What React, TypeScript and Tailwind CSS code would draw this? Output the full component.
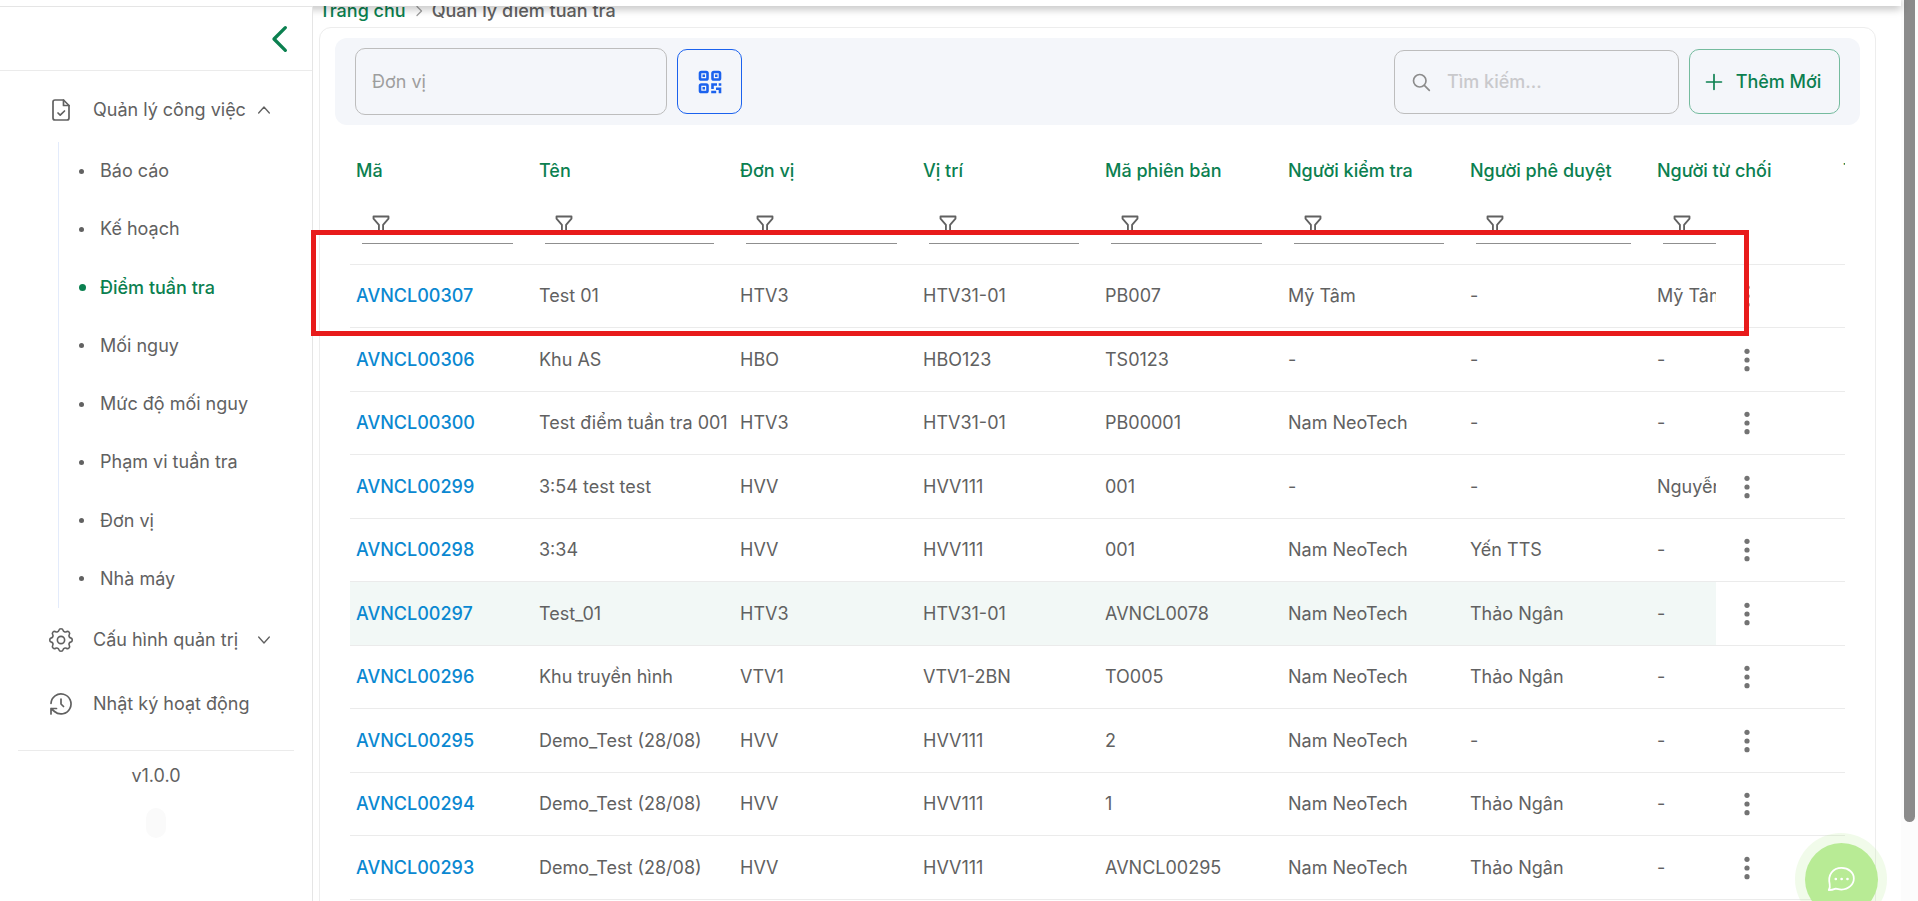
import type { ReactNode } from "react";

const workItems = [
  "Báo cáo",
  "Kế hoạch",
  "Điểm tuần tra",
  "Mối nguy",
  "Mức độ mối nguy",
  "Phạm vi tuần tra",
  "Đơn vị",
  "Nhà máy",
];

const columns = [
  { label: "Mã", width: "w-[183px]" },
  { label: "Tên", width: "w-[201px]" },
  { label: "Đơn vị", width: "w-[183px]" },
  { label: "Vị trí", width: "w-[182px]" },
  { label: "Mã phiên bản", width: "w-[183px]" },
  { label: "Người kiểm tra", width: "w-[182px]" },
  { label: "Người phê duyệt", width: "w-[187px]" },
  { label: "Người từ chối", width: "w-[186px]" },
  { label: "Trạng thái", width: "w-[187px]" },
];

const rows = [
  ["AVNCL00307", "Test 01", "HTV3", "HTV31-01", "PB007", "Mỹ Tâm", "-", "Mỹ Tâm"],
  ["AVNCL00306", "Khu AS", "HBO", "HBO123", "TS0123", "-", "-", "-"],
  ["AVNCL00300", "Test điểm tuần tra 001", "HTV3", "HTV31-01", "PB00001", "Nam NeoTech", "-", "-"],
  ["AVNCL00299", "3:54 test test", "HVV", "HVV111", "001", "-", "-", "Nguyễn"],
  ["AVNCL00298", "3:34", "HVV", "HVV111", "001", "Nam NeoTech", "Yến TTS", "-"],
  ["AVNCL00297", "Test_01", "HTV3", "HTV31-01", "AVNCL0078", "Nam NeoTech", "Thảo Ngân", "-"],
  ["AVNCL00296", "Khu truyền hình", "VTV1", "VTV1-2BN", "TO005", "Nam NeoTech", "Thảo Ngân", "-"],
  ["AVNCL00295", "Demo_Test (28/08)", "HVV", "HVV111", "2", "Nam NeoTech", "-", "-"],
  ["AVNCL00294", "Demo_Test (28/08)", "HVV", "HVV111", "1", "Nam NeoTech", "Thảo Ngân", "-"],
  ["AVNCL00293", "Demo_Test (28/08)", "HVV", "HVV111", "AVNCL00295", "Nam NeoTech", "Thảo Ngân", "-"],
];

const hoveredRow = "AVNCL00297";

function Icon({ className, width = 1.5, children }: { className: string; width?: number; children: ReactNode }) {
  return (
    <svg
      viewBox="0 0 24 24"
      className={className}
      fill="none"
      stroke="currentColor"
      strokeWidth={width}
      strokeLinecap="round"
      strokeLinejoin="round"
      aria-hidden="true"
    >
      {children}
    </svg>
  );
}

function DocIcon() {
  return (
    <Icon className="w-6 h-6" width={1.7}>
      <path d="M14.500 2H6a2 2 0 0 0-2 2v16a2 2 0 0 0 2 2h12a2 2 0 0 0 2-2V7.500z" />
      <path d="M14.500 2v5.500H20M9 15l2.200 2.200 4.300-4.200" />
    </Icon>
  );
}

function GearIcon() {
  return (
    <Icon className="w-[30px] h-[30px]" width={1.3}>
      <circle cx="12" cy="12" r="2.900" />
      <path d="M10.300 4.300c.4-1.750 3-1.750 3.400 0a1.720 1.720 0 0 0 2.570 1.070c1.550-.94 3.310.83 2.370 2.370a1.720 1.720 0 0 0 1.070 2.570c1.750.4 1.750 3 0 3.400a1.720 1.720 0 0 0-1.070 2.570c.94 1.540-.83 3.310-2.370 2.370a1.720 1.720 0 0 0-2.570 1.060c-.4 1.760-3 1.760-3.400 0a1.720 1.720 0 0 0-2.570-1.060c-1.540.94-3.310-.83-2.370-2.370a1.720 1.720 0 0 0-1.060-2.570c-1.760-.4-1.760-3 0-3.400a1.720 1.720 0 0 0 1.060-2.570c-.94-1.540.83-3.310 2.370-2.370a1.720 1.720 0 0 0 2.570-1.070z" />
    </Icon>
  );
}

function HistoryIcon() {
  return (
    <Icon className="w-6 h-6" width={1.7}>
      <path d="M2 11.500a10 10 0 1 1 3.500 8L2 16.500M2 22v-5.500h5.500M12 7v5l2.500 2.500" />
    </Icon>
  );
}

function FilterIcon() {
  return (
    <Icon className="w-5 h-5" width={2.2}>
      <path d="M3 3h18v2.500L14.500 13v8h-5v-8L3 5.500z" />
    </Icon>
  );
}

function QrIcon() {
  return (
    <svg viewBox="0 0 24 24" className="w-6 h-6" fill="none" stroke="currentColor" strokeWidth="2.600" aria-hidden="true">
      <rect x="2" y="2" width="7.500" height="7.500" rx="1.300" />
      <rect x="14.500" y="2" width="7.500" height="7.500" rx="1.300" />
      <rect x="2" y="14.500" width="7.500" height="7.500" rx="1.300" />
      <path d="M4.500 5.750h2.500M17 5.750h2.500M4.500 18.250h2.500M14.500 19v-4.500H19M22 13.200v2.600M18 18.700h4v4.600M13.200 22h5" />
    </svg>
  );
}

function Sidebar() {
  return (
    <aside className="relative z-20 w-[313px] shrink-0 bg-white border-t border-r border-[#e5e5e5]">
      <div className="h-16 flex items-center justify-end pr-4 border-b border-[#ebebeb]">
        <button type="button" aria-label="Thu gọn" className="text-[#0b8050]">
          <Icon className="w-8 h-8" width={2.5}>
            <path d="M16 3.500 7.500 12l8.500 8.500" />
          </Icon>
        </button>
      </div>
      <nav>
        <button type="button" className="w-full h-16 mt-[7px] pl-12 flex items-center">
          <span className="w-[45px] pl-px"><DocIcon /></span>
          <span>Quản lý công việc</span>
          <Icon className="w-4 h-4 ml-2.5" width={2}>
            <path d="m4 16.500 8-9 8 9" />
          </Icon>
        </button>
        <ul className="ml-[58px] h-[466px] flex flex-col border-l border-[#e3ebfb]">
          {workItems.map((item) => (
            <li key={item} className="flex-1 flex items-center">
              <a
                href="#"
                className={
                  item === "Điểm tuần tra"
                    ? "flex items-center text-[#0b8050] font-medium"
                    : "flex items-center"
                }
              >
                <span className="w-[41px] pl-5">
                  <span
                    className={
                      item === "Điểm tuần tra"
                        ? "block w-[7px] h-[7px] rounded-full bg-current"
                        : "block w-[5px] h-[5px] rounded-full bg-current"
                    }
                  />
                </span>
                {item}
              </a>
            </li>
          ))}
        </ul>
        <button type="button" className="w-full h-16 pl-[46px] flex items-center">
          <span className="w-[47px]"><GearIcon /></span>
          <span>Cấu hình quản trị</span>
          <Icon className="w-4 h-4 ml-[18px]" width={2}>
            <path d="m4 7.500 8 9 8-9" />
          </Icon>
        </button>
        <a href="#" className="h-16 pl-12 flex items-center">
          <span className="w-[45px] pl-px"><HistoryIcon /></span>
          Nhật ký hoạt động
        </a>
      </nav>
      <div className="mx-[18px] mt-3.5 pt-[11px] border-t border-[#ebebeb] flex flex-col items-center">
        <span>v1.0.0</span>
        <span className="mt-[18px] w-5 h-[30px] rounded-full bg-[#fafafa]" />
      </div>
    </aside>
  );
}

function Toolbar() {
  return (
    <div className="flex items-center justify-between bg-[#f4f6fa] rounded-xl px-5 h-[87px]">
      <div className="flex items-center gap-2.5">
        <input
          type="text"
          aria-label="Đơn vị"
          placeholder="Đơn vị"
          className="w-[312px] h-[67px] px-4 rounded-[10px] border border-[#bdbdbd] placeholder:text-[#9e9e9e] outline-none"
        />
        <button
          type="button"
          aria-label="Mã QR"
          className="w-[65px] h-[65px] flex items-center justify-center rounded-[10px] border border-[#1b62ee] text-[#1b62ee]"
        >
          <QrIcon />
        </button>
      </div>
      <div className="flex items-center gap-2.5">
        <label className="w-[285px] h-16 px-4 flex items-center gap-4 rounded-[10px] border border-[#bdbdbd]">
          <Icon className="w-5 h-5 shrink-0 text-[#8c8c8c]" width={2}>
            <circle cx="10.500" cy="10.500" r="7.500" />
            <path d="m16 16 6 6" />
          </Icon>
          <input
            type="search"
            aria-label="Tìm kiếm"
            placeholder="Tìm kiếm..."
            className="min-w-0 flex-1 placeholder:text-[#c9c9cc] placeholder:font-medium outline-none"
          />
        </label>
        <button
          type="button"
          className="w-[151px] h-[65px] pr-1 flex items-center justify-center gap-3 rounded-[10px] border border-[#75bb9e] text-[#0b8050] font-medium"
        >
          <Icon className="w-5 h-5" width={2}>
            <path d="M12 3v18M3 12h18" />
          </Icon>
          Thêm Mới
        </button>
      </div>
    </div>
  );
}

function PointTable() {
  return (
    <div className="mx-[15px] mt-[17px] overflow-hidden">
      <table className="w-[1803px] table-fixed border-separate border-spacing-0 text-left whitespace-nowrap">
        <thead>
          <tr className="h-[58px] text-[#0b8050]">
            {columns.map((col) => (
              <th key={col.label} className={`${col.width} px-1.5 font-medium`}>
                {col.label}
              </th>
            ))}
            <th className="w-[129px] sticky right-0" />
          </tr>
          <tr className="h-[65px]">
            {columns.map((col) => (
              <td key={col.label} className="px-1.5 pt-1 align-top border-b border-[#ebebeb]">
                <label className="ml-1.5 mr-3.5 h-10 flex items-center border-b border-[#8f8f8f]">
                  <span className="px-[9px]"><FilterIcon /></span>
                  <input type="text" aria-label={`Lọc ${col.label}`} className="min-w-0 flex-1 outline-none" />
                </label>
              </td>
            ))}
            <td className="sticky right-0 bg-white border-b border-[#ebebeb]" />
          </tr>
        </thead>
        <tbody>
          {rows.map((row) => (
            <tr
              key={row[0]}
              className={row[0] === hoveredRow ? "odd:h-[63px] even:h-16 bg-[#f2f8f6]" : "odd:h-[63px] even:h-16"}
            >
              {row.map((cell, i) => (
                <td key={i} className="px-1.5 border-b border-[#ebebeb]">
                  {i === 0 ? (
                    <a href="#" className="text-[#0a88d1] font-medium">{cell}</a>
                  ) : (
                    cell
                  )}
                </td>
              ))}
              <td className="border-b border-[#ebebeb]" />
              <td className="sticky right-0 bg-white border-b border-[#ebebeb] pl-[19px]">
                <button type="button" aria-label="Tùy chọn" className="block text-[#737373]">
                  <svg viewBox="0 0 24 24" className="w-6 h-6" fill="currentColor" aria-hidden="true">
                    <circle cx="12" cy="3.300" r="2.600" />
                    <circle cx="12" cy="12" r="2.600" />
                    <circle cx="12" cy="20.700" r="2.600" />
                  </svg>
                </button>
              </td>
            </tr>
          ))}
        </tbody>
      </table>
    </div>
  );
}

function ChatButton() {
  return (
    <button
      type="button"
      aria-label="Trò chuyện"
      className="fixed z-40 right-[31px] -bottom-6 w-[92px] h-[92px] flex items-center justify-center rounded-full bg-[#b8eb95]/20"
    >
      <span className="w-[73px] h-[73px] flex items-center justify-center rounded-full bg-[#b8eb95] text-white">
        <Icon className="w-7 h-7" width={1.5}>
          <path d="M1.500 21.500c1-1.500 1.200-3 .8-5C.5 8.500 5 2.500 12.500 2.500c6 0 10.500 4 10.500 9s-4.500 9.500-10.500 9.500c-2 0-3.500-.5-5-.8-2 .8-4 1.300-6 1.300z" />
          <path d="M7.500 12h.1M12.500 12h.1M17.500 12h.1" strokeWidth="2.200" />
        </Icon>
      </span>
    </button>
  );
}

export default function App() {
  return (
    <div className="flex h-screen overflow-hidden bg-white font-['Inter',sans-serif] text-lg text-[#616161]">
      <div className="flex-1 min-w-0 flex flex-col">
        <header className="relative z-10 h-1.5 shrink-0 bg-white shadow-[0_2px_8px_rgba(0,0,0,0.35)]" />
        <div className="relative flex-1 min-h-0 flex">
          <Sidebar />
          <main className="flex-1 min-w-0 overflow-hidden">
            <nav aria-label="Breadcrumb" className="-mt-1.5 ml-1.5 h-[27px] flex items-start gap-[7px] leading-[22px] font-medium">
              <a href="#" className="text-[#0b8050]">Trang chủ</a>
              <Icon className="w-3 h-[22px] text-[#9e9e9e]" width={2.5}>
                <path d="m8 3 9 9-9 9" />
              </Icon>
              <span>Quản lý điểm tuần tra</span>
            </nav>
            <section className="ml-1.5 mr-[25px] px-[15px] pt-2.5 min-h-full rounded-xl border border-[#ededed]">
              <Toolbar />
              <PointTable />
            </section>
          </main>
          <div className="absolute z-30 left-[311px] right-[152px] top-[224px] h-[106px] border-[5px] border-[#e81b1b] pointer-events-none" />
        </div>
      </div>
      <div className="w-[17px] shrink-0 bg-[#fcfcfc] flex flex-col items-center">
        <div className="w-[11px] h-[822px] rounded-b-full bg-[#8b8b8b]" />
      </div>
      <ChatButton />
    </div>
  );
}
